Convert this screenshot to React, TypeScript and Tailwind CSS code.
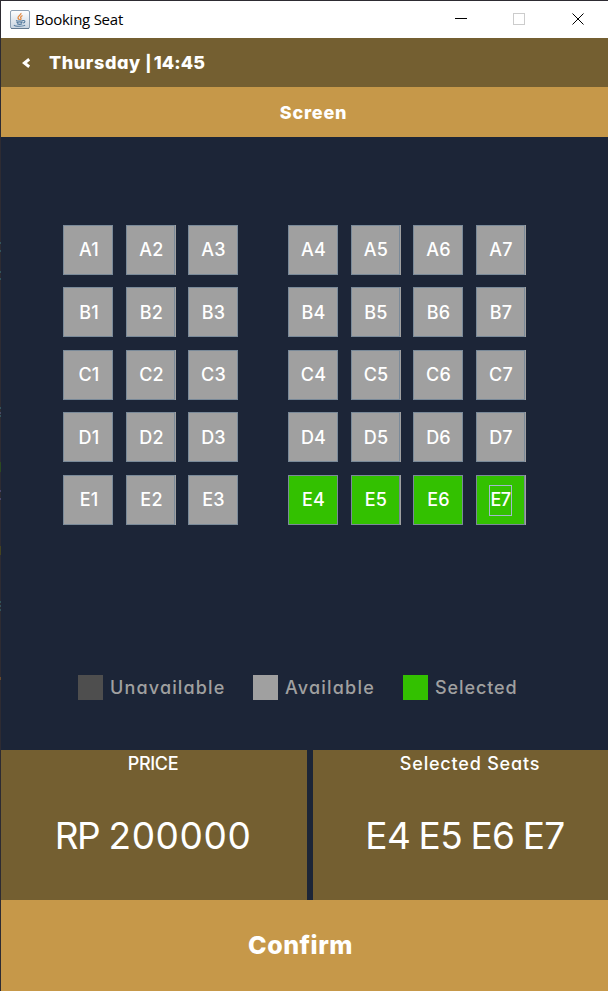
type SeatState = 'available' | 'selected' | 'focused';

const rows = ['A', 'B', 'C', 'D', 'E'];
const numbers = [1, 2, 3, 4, 5, 6, 7];

const wideColumns = [2, 5, 7];

// Slivers of the window behind, showing through the left frame.
const edgeMarks = [
  'top-[241px] h-[2px] bg-[#33535a]',
  'top-[249px] h-[2px] bg-[#33535a]',
  'top-[270px] h-[2px] bg-[#33535a]',
  'top-[277px] h-[2px] bg-[#33535a]',
  'top-[406px] h-[2px] bg-[#33535a]',
  'top-[411px] h-[2px] bg-[#454b63]',
  'top-[414px] h-[2px] bg-[#33535a]',
  'top-[461px] h-[10px] bg-[#2b4a20]',
  'top-[489px] h-[2px] bg-[#4b4668]',
  'top-[497px] h-[2px] bg-[#4b4668]',
  'top-[545px] h-[9px] bg-[#45431f]',
  'top-[600px] h-[2px] bg-[#33535a]',
  'top-[604px] h-[2px] bg-[#33535a]',
  'top-[608px] h-[2px] bg-[#33535a]',
  'top-[676px] h-[3px] bg-[#6b4a2a]',
];

function seatState(row: string, n: number): SeatState {
  if (row !== 'E' || n < 4) return 'available';
  return n === 7 ? 'focused' : 'selected';
}

function Seat({ row, n }: { row: string; n: number }) {
  const state = seatState(row, n);
  const green = state !== 'available';
  const wide = wideColumns.includes(n);
  return (
    <button
      className={`flex h-[50px] w-[50px] ${wide ? 'border-r border-[#a0a0a0]' : ''}`}
    >
      <span
        className={`flex h-full w-full items-center justify-center border border-[#7a8a99] text-[18px] leading-none font-medium text-white ${
          green ? 'bg-[#33c100]' : 'bg-[#a0a0a0]'
        } ${row === 'B' || row === 'D' ? 'pt-[2px]' : ''} ${n < 3 ? 'pl-[2px]' : 'pl-px'}`}
      >
        <span
          className={
            state === 'focused'
              ? '-ml-px flex h-[31px] w-[23px] items-center justify-center border border-[#a3b8cc] tracking-[-0.6px]'
              : 'tracking-[0.2px]'
          }
        >
          {row}
          {n}
        </span>
      </span>
    </button>
  );
}

function JavaIcon() {
  return (
    <svg width="20" height="20" viewBox="0 0 20 20" fill="none">
      <defs>
        <linearGradient id="tile" x1="0" y1="0" x2="0" y2="1">
          <stop offset="0" stopColor="#ffffff" />
          <stop offset="1" stopColor="#c7d3df" />
        </linearGradient>
      </defs>
      <rect x="0.5" y="0.5" width="19" height="18" rx="1.5" fill="url(#tile)" stroke="#8da0b3" />
      <path d="M1 18.5H19" stroke="#63798f" />
      <path d="M11 3C11.5 5 7.5 6 8 8C8.2 9 9.5 9.3 9.5 10M12.5 5.5C10 7 10.5 7.5 11 8.2C11.3 9 10.8 9.5 10.2 10" stroke="#e38a42" strokeWidth="1.3" />
      <path d="M6 10.5C7.5 11.3 11.5 11.3 13 10.5M6.5 12C8 13 11 13 12.5 12M7 13.8C8.5 14.5 11 14.5 12.2 13.8M13 10.5C15.5 10 15.5 12.5 13 13M4 15C5 16.7 13.5 16.7 15 15" stroke="#557b9e" strokeWidth="1.1" />
    </svg>
  );
}

function Legend({ color, label, className }: { color: string; label: string; className: string }) {
  return (
    <div className={`flex items-center gap-[7px] ${className}`}>
      <span className={`h-[25px] w-[25px] ${color}`} />
      <span className="text-[18px] leading-[25px] font-medium whitespace-nowrap text-[#a0a0a0]">{label}</span>
    </div>
  );
}

export default function App() {
  return (
    <div className="relative flex h-[991px] w-[608px] flex-col border-t border-l border-[#2d2b32] bg-[#1c2537] font-[Inter,sans-serif] [font-feature-settings:'cv11']">
      {edgeMarks.map((mark) => (
        <span key={mark} className={`absolute -left-px w-px ${mark}`} />
      ))}

      <header className="flex h-[37px] shrink-0 items-center bg-white pl-[9px] text-black">
        <JavaIcon />
        <span className="ml-[5px] font-['Open_Sans',sans-serif] text-[15px] tracking-[-0.25px]">Booking Seat</span>
        <svg className="ml-auto" width="153" height="37" viewBox="0 0 153 37" fill="none" shapeRendering="crispEdges">
          <path d="M0 17.5H12" stroke="#000" />
          <rect x="58.5" y="12.5" width="11" height="11" stroke="#ccc" />
          <path d="M117.5 12.5L128.5 23.5M128.5 12.5L117.5 23.5" stroke="#000" shapeRendering="auto" />
        </svg>
      </header>

      <nav className="flex h-[49px] shrink-0 items-center bg-[#745f31] text-[18px] font-extrabold text-white">
        <svg className="ml-[21px]" width="8" height="10" viewBox="0 0 8 10" fill="none">
          <path d="M7.2 1.2L2.4 5L7.2 8.8" stroke="white" strokeWidth="3" />
        </svg>
        <span className="ml-[19px] tracking-[0.6px] whitespace-nowrap">
          Thursday <span className="text-[16px] tracking-[-0.3px] [word-spacing:-0.8px]">| </span>
          <span className="tracking-[0.1px]">14:45</span>
        </span>
      </nav>

      <div className="flex h-[50px] shrink-0 items-center justify-center bg-[#c69849] pl-[18px] text-[18px] font-extrabold tracking-[0.8px] text-white">
        <span>Screen</span>
      </div>

      <main className="flex h-[613px] shrink-0 flex-col">
        <div className="mt-[88px] ml-[62px] grid grid-cols-[63px_62px_100px_63px_62px_63px_50px] grid-rows-[62px_63px_62px_63px_50px]">
          {rows.map((row) => numbers.map((n) => <Seat key={row + n} row={row} n={n} />))}
        </div>
        <div className="mt-[150px] ml-[77px] flex">
          <Legend color="bg-[#4e4e4e]" label="Unavailable" className="w-[175px] tracking-[1.15px]" />
          <Legend color="bg-[#a0a0a0]" label="Available" className="w-[150px] tracking-[1.2px]" />
          <Legend color="bg-[#33c100]" label="Selected" className="tracking-[0.9px]" />
        </div>
      </main>

      <section className="flex h-[150px] shrink-0 gap-[6px] text-white">
        <div className="flex w-[306px] flex-col items-center bg-[#745f31] pr-[2px]">
          <span className="text-[18px] leading-[27px] font-medium tracking-[-0.3px]">PRICE</span>
          <span className="mt-[32px] text-[37px] leading-[54px] whitespace-nowrap [word-spacing:-1px]">
            <span className="tracking-[-1.5px]">RP</span> <span className="tracking-[0.6px]">200000</span>
          </span>
        </div>
        <div className="flex flex-1 flex-col items-center bg-[#745f31] pl-[19px]">
          <span className="text-[18px] leading-[27px] font-medium tracking-[0.8px]">Selected Seats</span>
          <span className="mt-[32px] mr-[10px] text-[37px] leading-[54px] tracking-[-0.6px] whitespace-nowrap [word-spacing:-1.5px]">E4 E5 E6 E7</span>
        </div>
      </section>

      <button className="flex h-[91px] shrink-0 items-center justify-center bg-[#c69849] pr-[8px] text-[25px] font-extrabold tracking-[0.5px] text-white">
        <span>Confirm</span>
      </button>
    </div>
  );
}
